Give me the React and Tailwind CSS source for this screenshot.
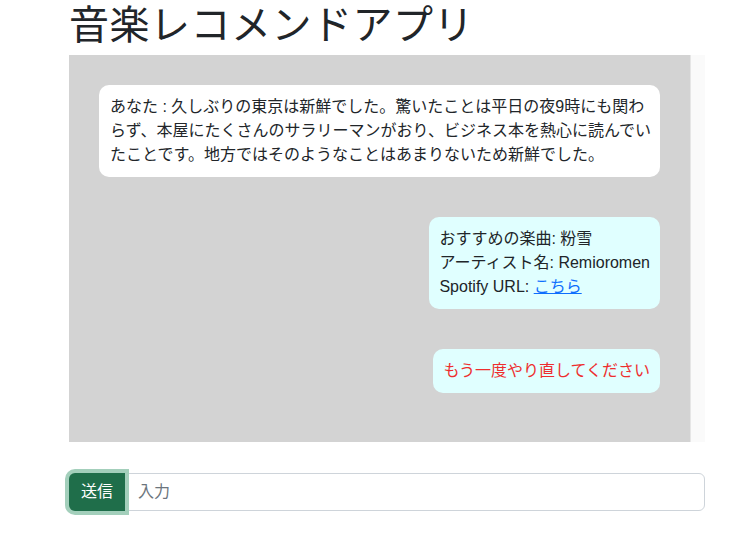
import React, { useState } from "react";

const messages = [
  {
    from: "user",
    lines: [
      "あなた : 久しぶりの東京は新鮮でした。驚いたことは平日の夜9時にも関わ",
      "らず、本屋にたくさんのサラリーマンがおり、ビジネス本を熱心に読んでい",
      "たことです。地方ではそのようなことはあまりないため新鮮でした。",
    ],
  },
  { from: "bot", kind: "song", title: "粉雪", artist: "Remioromen" },
  { from: "bot", kind: "error", text: "もう一度やり直してください" },
];

const Bubble = ({ msg }) => {
  if (msg.from === "user") {
    return (
      <div className="bg-white rounded-[10px] px-[11px] py-[10px] leading-6 whitespace-nowrap">
        {msg.lines.map((l, i) => (
          <div key={i}>{l}</div>
        ))}
      </div>
    );
  }
  if (msg.kind === "error") {
    return (
      <div className="self-end bg-[#e0ffff] rounded-[10px] px-[10px] py-[10px] leading-6 text-[#ee2e2e] whitespace-nowrap">
        {msg.text}
      </div>
    );
  }
  return (
    <div className="self-end bg-[#e0ffff] rounded-[10px] px-[10px] py-[10px] leading-6 whitespace-nowrap">
      <div>おすすめの楽曲: {msg.title}</div>
      <div>アーティスト名: {msg.artist}</div>
      <div>
        Spotify URL:{" "}
        <a href="#" className="text-[#0d6efd] underline">
          こちら
        </a>
      </div>
    </div>
  );
};

export default function App() {
  const [text, setText] = useState("");

  return (
    <div
      className="min-h-screen bg-white text-[#212529] text-base"
      style={{ fontFamily: '"Liberation Sans", "Noto Sans CJK JP", sans-serif' }}
    >
      <div className="ml-[69px] w-[636px]">
        <h1 className="pt-[2px] text-[40px] leading-[46px] font-normal tracking-[0.5px] mb-[7px]">
          音楽レコメンドアプリ
        </h1>

        <div className="flex h-[387px]">
          <div className="flex-1 min-w-0 bg-[#d3d3d3] p-[30px] flex flex-col gap-[40px]">
            {messages.map((m, i) => (
              <Bubble key={i} msg={m} />
            ))}
          </div>
          <div className="w-[15px] shrink-0 bg-[#fafafa] border-l border-[#e6e6e6]" />
        </div>

        <div className="mt-[31px] flex h-[38px]">
          <button className="relative z-10 px-3 bg-[#1f6e4a] text-white rounded-l-[6px] ring-4 ring-[#a3cfbb] text-base">
            送信
          </button>
          <input
            value={text}
            onChange={(e) => setText(e.target.value)}
            placeholder="入力"
            className="flex-1 border border-[#ced4da] rounded-r-[6px] px-3 text-base outline-none placeholder:text-[#6c757d]"
          />
        </div>
      </div>
    </div>
  );
}
